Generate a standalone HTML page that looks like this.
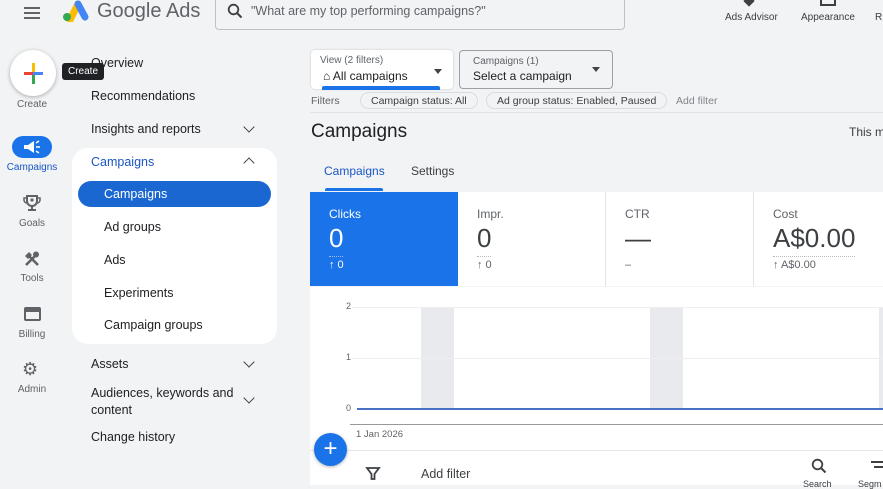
<!DOCTYPE html>
<html><head><meta charset="utf-8"><style>
*{margin:0;padding:0;box-sizing:border-box}
body{width:883px;height:485px;overflow:hidden;background:#f1f3f4;font-family:"Liberation Sans",Arial,sans-serif;color:#202124;position:relative}
.a{position:absolute;white-space:nowrap}
.nav{font-size:12.5px;color:#202124}
.rail{font-size:10px;color:#5f6368;text-align:center;width:60px}
.chev{width:8px;height:8px;border-right:1.6px solid #444;border-bottom:1.6px solid #444;transform:rotate(45deg)}
.card{top:192px;height:94px;background:#fff;border-right:1px solid #e3e3e3}
.card .l{position:absolute;left:19px;top:15px;font-size:12px;color:#5f6368}
.card .v{position:absolute;left:19px;top:31px;font-size:26px;color:#3c4043;border-bottom:1px dotted #bbb;padding-bottom:2px}
.card .s{position:absolute;left:19px;top:67px;font-size:11px;color:#5f6368}
.chip{top:92px;height:17px;border:1px solid #dadce0;border-radius:9px;font-size:10.5px;color:#3c4043;padding:2px 10px;background:#f1f3f4}
</style></head><body>
<div class="a" style="left:24px;top:5px;width:16px">
<div style="height:2px;background:#5f6368;margin:2px 0 3px"></div><div style="height:2px;background:#5f6368;margin-bottom:3px"></div><div style="height:2px;background:#5f6368"></div></div>
<svg class="a" style="left:61px;top:0" width="28" height="22" viewBox="0 0 28 22"><path d="M9 20 L17 4" stroke="#fbbc04" stroke-width="7" stroke-linecap="round"/><path d="M17 4 L24 17" stroke="#4285f4" stroke-width="7" stroke-linecap="round"/><circle cx="6" cy="17" r="4" fill="#34a853"/></svg>
<div class="a" style="left:97px;top:0;font-size:20px;color:#5f6368">Google Ads</div>
<div class="a" style="left:215px;top:-2px;width:410px;height:32px;border:1px solid #bdc1c6;border-radius:0 0 4px 4px;background:#f1f3f4"></div>
<svg class="a" style="left:227px;top:3px" width="16" height="16" viewBox="0 0 16 16"><circle cx="6.5" cy="6.5" r="4.8" stroke="#3c4043" stroke-width="1.8" fill="none"/><path d="M10 10l4.5 4.5" stroke="#3c4043" stroke-width="2"/></svg>
<div class="a" style="left:251px;top:4px;font-size:12.5px;color:#5f6368">"What are my top performing campaigns?"</div>
<div class="a" style="left:745px;top:-3px;width:8px;height:8px;background:#3c4043;transform:rotate(45deg)"></div>
<div class="a" style="left:725px;top:12px;font-size:10px;color:#3c4043">Ads Advisor</div>
<div class="a" style="left:820px;top:-2px;width:16px;height:8px;border:2px solid #3c4043;border-top:none"></div>
<div class="a" style="left:801px;top:12px;font-size:10px;color:#3c4043">Appearance</div>
<div class="a" style="left:875px;top:12px;font-size:10px;color:#3c4043">R</div>
<div class="a" style="left:10px;top:50px;width:46px;height:46px;border-radius:50%;background:#fff;box-shadow:0 1px 4px rgba(0,0,0,.3)"></div>
<div class="a" style="left:24px;top:72px;width:9px;height:3px;background:#ea4335"></div>
<div class="a" style="left:33px;top:72px;width:10px;height:3px;background:#4285f4"></div>
<div class="a" style="left:32px;top:63px;width:3px;height:9px;background:#fbbc04"></div>
<div class="a" style="left:32px;top:75px;width:3px;height:9px;background:#34a853"></div>
<div class="a rail" style="left:2px;top:99px">Create</div>
<div class="a" style="left:62px;top:63px;background:#202124;color:#fff;font-size:10px;padding:3px 6px;border-radius:3px">Create</div>
<div class="a" style="left:12px;top:136px;width:40px;height:22px;border-radius:11px;background:#1a73e8"></div>
<svg class="a" style="left:22px;top:140px" width="20" height="14" viewBox="0 0 20 14"><path d="M2 5h4l6-4v12l-6-4H2z" fill="#fff"/><path d="M14 7h4M14 3l3-2M14 11l3 2" stroke="#fff" stroke-width="1.5"/></svg>
<div class="a rail" style="left:2px;top:162px;color:#1a56c4">Campaigns</div>
<svg class="a" style="left:23px;top:194px" width="18" height="18" viewBox="0 0 18 18"><path d="M4 2h10v5a5 5 0 0 1-10 0z" fill="none" stroke="#5f6368" stroke-width="2"/><path d="M4 4H1v2a3 3 0 0 0 3 3M14 4h3v2a3 3 0 0 1-3 3" fill="none" stroke="#5f6368" stroke-width="1.5"/><path d="M9 12v3M5 16h8" stroke="#5f6368" stroke-width="2"/><circle cx="9" cy="6" r="1.6" fill="#5f6368"/></svg>
<div class="a rail" style="left:2px;top:218px">Goals</div>
<svg class="a" style="left:23px;top:250px" width="18" height="18" viewBox="0 0 18 18"><path d="M3 15L12 6M15 15L6 6" stroke="#5f6368" stroke-width="2.6"/><path d="M2 6l4-4 3 3-4 4z" fill="#5f6368"/><circle cx="13" cy="4.5" r="3" fill="#5f6368"/></svg>
<div class="a rail" style="left:2px;top:273px">Tools</div>
<div class="a" style="left:24px;top:307px;width:17px;height:14px;border:2px solid #5f6368;border-top-width:5px;border-radius:2px"></div>
<div class="a rail" style="left:2px;top:329px">Billing</div>
<div class="a" style="left:22px;top:359px;font-size:18px;color:#5f6368">⚙</div>
<div class="a rail" style="left:2px;top:384px">Admin</div>
<div class="a nav" style="left:91px;top:56px">Overview</div>
<div class="a nav" style="left:91px;top:89px">Recommendations</div>
<div class="a nav" style="left:91px;top:122px">Insights and reports</div>
<div class="a chev" style="left:245px;top:123px"></div>
<div class="a" style="left:72px;top:148px;width:205px;height:196px;background:#fff;border-radius:16px"></div>
<div class="a nav" style="left:91px;top:155px;color:#1a56c4">Campaigns</div>
<div class="a chev" style="left:245px;top:159px;transform:rotate(225deg)"></div>
<div class="a" style="left:78px;top:181px;width:193px;height:26px;border-radius:13px;background:#1a67d2"></div>
<div class="a nav" style="left:104px;top:187px;color:#fff">Campaigns</div>
<div class="a nav" style="left:104px;top:220px">Ad groups</div>
<div class="a nav" style="left:104px;top:253px">Ads</div>
<div class="a nav" style="left:104px;top:286px">Experiments</div>
<div class="a nav" style="left:104px;top:318px">Campaign groups</div>
<div class="a nav" style="left:91px;top:357px">Assets</div>
<div class="a chev" style="left:245px;top:358px"></div>
<div class="a nav" style="left:91px;top:385px;line-height:17px">Audiences, keywords and<br>content</div>
<div class="a chev" style="left:245px;top:394px"></div>
<div class="a nav" style="left:91px;top:430px">Change history</div>
<div class="a" style="left:311px;top:50px;width:142px;height:39px;background:#fff;border-radius:4px;box-shadow:0 0 2px rgba(0,0,0,.2)"></div>
<div class="a" style="left:320px;top:55px;font-size:10px;color:#5f6368">View (2 filters)</div>
<div class="a" style="left:323px;top:69px;font-size:12px">⌂ All campaigns</div>
<div class="a" style="left:322px;top:86px;width:118px;height:4px;background:#1a73e8;border-radius:2px 2px 0 0"></div>
<div class="a" style="left:434px;top:69px;border:4px solid transparent;border-top:5px solid #444"></div>
<div class="a" style="left:459px;top:50px;width:154px;height:39px;border:1px solid #9aa0a6;border-radius:4px"></div>
<div class="a" style="left:473px;top:56px;font-size:10px;color:#5f6368">Campaigns (1)</div>
<div class="a" style="left:473px;top:69px;font-size:12px">Select a campaign</div>
<div class="a" style="left:592px;top:67px;border:4px solid transparent;border-top:5px solid #444"></div>
<div class="a" style="left:311px;top:95px;font-size:10.5px;color:#5f6368">Filters</div>
<div class="a chip" style="left:360px">Campaign status: All</div>
<div class="a chip" style="left:486px">Ad group status: Enabled, Paused</div>
<div class="a" style="left:676px;top:95px;font-size:10.5px;color:#80868b">Add filter</div>
<div class="a" style="left:310px;top:112px;width:573px;height:1px;background:#e3e3e3"></div>
<div class="a" style="left:311px;top:121px;font-size:19px;color:#202124">Campaigns</div>
<div class="a" style="left:849px;top:125px;font-size:12px;color:#3c4043">This m</div>
<div class="a" style="left:324px;top:164px;font-size:12px;color:#1a56c4">Campaigns</div>
<div class="a" style="left:411px;top:164px;font-size:12px;color:#3c4043">Settings</div>
<div class="a" style="left:325px;top:188px;width:58px;height:3px;background:#1a73e8;border-radius:2px 2px 0 0"></div>
<div class="a card" style="left:310px;width:148px;background:#1a73e8;border:none"><div class="l" style="color:#fff">Clicks</div><div class="v" style="color:#fff;border-color:#9cc0f5">0</div><div class="s" style="color:#fff">↑ 0</div></div>
<div class="a card" style="left:458px;width:148px"><div class="l">Impr.</div><div class="v">0</div><div class="s">↑ 0</div></div>
<div class="a card" style="left:606px;width:148px"><div class="l">CTR</div><div class="v" style="border:none">—</div><div class="s">–</div></div>
<div class="a card" style="left:754px;width:129px;border:none"><div class="l">Cost</div><div class="v">A$0.00</div><div class="s">↑ A$0.00</div></div>
<div class="a" style="left:310px;top:287px;width:573px;height:198px;background:#fff"></div>
<div class="a" style="left:421px;top:307px;width:33px;height:102px;background:#e8eaed"></div>
<div class="a" style="left:650px;top:307px;width:33px;height:102px;background:#e8eaed"></div>
<div class="a" style="left:879px;top:307px;width:4px;height:102px;background:#e8eaed"></div>
<div class="a" style="left:352px;top:307px;width:531px;height:1px;background:#eee"></div>
<div class="a" style="left:352px;top:358px;width:531px;height:1px;background:#eee"></div>
<div class="a" style="left:357px;top:408px;width:526px;height:2px;background:#4a72c4"></div>
<div class="a" style="left:346px;top:301px;font-size:9px;color:#5f6368">2</div>
<div class="a" style="left:346px;top:352px;font-size:9px;color:#5f6368">1</div>
<div class="a" style="left:346px;top:403px;font-size:9px;color:#5f6368">0</div>
<div class="a" style="left:350px;top:424px;width:533px;height:1px;background:#999"></div>
<div class="a" style="left:356px;top:429px;font-size:9.5px;color:#5f6368">1 Jan 2026</div>
<div class="a" style="left:310px;top:450px;width:573px;height:1px;background:#e8e8e8"></div>
<div class="a" style="left:314px;top:433px;width:33px;height:33px;border-radius:50%;background:#1a73e8;color:#fff;font-size:24px;text-align:center;line-height:31px;box-shadow:0 1px 3px rgba(0,0,0,.3)">+</div>
<svg class="a" style="left:365px;top:466px" width="16" height="16" viewBox="0 0 16 16"><path d="M2 2h12L9.5 8v5h-3V8z" fill="none" stroke="#3c4043" stroke-width="1.8"/></svg>
<div class="a" style="left:421px;top:467px;font-size:12.5px;color:#3c4043">Add filter</div>
<svg class="a" style="left:811px;top:458px" width="16" height="16" viewBox="0 0 16 16"><circle cx="6.5" cy="6.5" r="4.8" stroke="#3c4043" stroke-width="1.8" fill="none"/><path d="M10 10l4.5 4.5" stroke="#3c4043" stroke-width="2"/></svg>
<div class="a" style="left:803px;top:479px;font-size:9px;color:#3c4043">Search</div>
<div class="a" style="left:871px;top:461px;width:12px;height:2px;background:#3c4043"></div>
<div class="a" style="left:874px;top:466px;width:9px;height:2px;background:#3c4043"></div>
<div class="a" style="left:858px;top:479px;font-size:9px;color:#3c4043">Segm</div>
</body></html>
